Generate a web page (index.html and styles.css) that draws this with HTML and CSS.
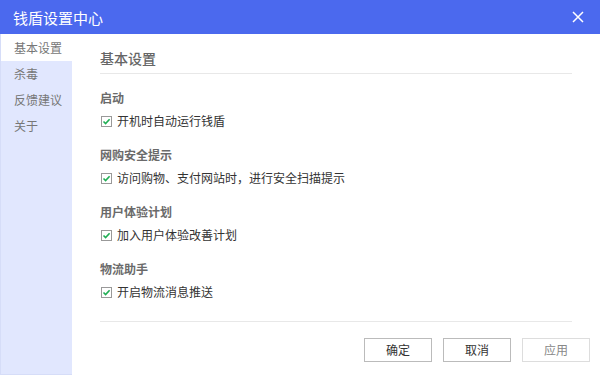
FILE: index.html
```html
<!DOCTYPE html>
<html>
<head>
<meta charset="utf-8">
<link rel="stylesheet" href="styles.css">
</head>
<body>
<div class="win">
  <div class="titlebar">
    <span class="title">钱盾设置中心</span>
    <svg class="close" width="12" height="12" viewBox="0 0 12 12"><path d="M1 1L11 11M11 1L1 11" stroke="#fff" stroke-width="1.5"/></svg>
  </div>
  <div class="body">
    <div class="side">
      <div class="item active">基本设置</div>
      <div class="item">杀毒</div>
      <div class="item">反馈建议</div>
      <div class="item">关于</div>
    </div>
    <div class="main">
      <div class="heading">基本设置</div>
      <div class="sections">
        <div class="sec">
          <div class="sec-title">启动</div>
          <label class="row"><span class="cb"><svg width="9" height="9" viewBox="0 0 9 9"><path d="M1.5 4.5L3.6 6.6L7.6 2.2" fill="none" stroke="#1fae54" stroke-width="1.6"/></svg></span>开机时自动运行钱盾</label>
        </div>
        <div class="sec">
          <div class="sec-title">网购安全提示</div>
          <label class="row"><span class="cb"><svg width="9" height="9" viewBox="0 0 9 9"><path d="M1.5 4.5L3.6 6.6L7.6 2.2" fill="none" stroke="#1fae54" stroke-width="1.6"/></svg></span>访问购物、支付网站时，进行安全扫描提示</label>
        </div>
        <div class="sec">
          <div class="sec-title">用户体验计划</div>
          <label class="row"><span class="cb"><svg width="9" height="9" viewBox="0 0 9 9"><path d="M1.5 4.5L3.6 6.6L7.6 2.2" fill="none" stroke="#1fae54" stroke-width="1.6"/></svg></span>加入用户体验改善计划</label>
        </div>
        <div class="sec">
          <div class="sec-title">物流助手</div>
          <label class="row"><span class="cb"><svg width="9" height="9" viewBox="0 0 9 9"><path d="M1.5 4.5L3.6 6.6L7.6 2.2" fill="none" stroke="#1fae54" stroke-width="1.6"/></svg></span>开启物流消息推送</label>
        </div>
      </div>
      <div class="footer">
        <button class="btn">确定</button>
        <button class="btn">取消</button>
        <button class="btn disabled">应用</button>
      </div>
    </div>
  </div>
</div>
</body>
</html>
```

FILE: styles.css
```css
* { box-sizing: border-box; }
html, body { margin: 0; padding: 0; }
body {
  width: 600px; height: 375px; overflow: hidden;
  font-family: "Noto Sans CJK SC", "Noto Sans", sans-serif;
  background: #fff;
}
.win { width: 600px; height: 375px; display: flex; flex-direction: column; }
.titlebar {
  height: 34px; background: #4b69ee; color: #fff;
  display: flex; align-items: center; justify-content: space-between;
  padding: 0 16px 0 13px; flex: none;
}
.title { font-size: 15px; letter-spacing: 0; }
.close { display: block; }
.body { flex: 1; display: flex; min-height: 0; }
.side {
  width: 72px; background: #e1e7fe; flex: none;
  border-left: 1px solid #d6ddf8; border-bottom: 1px solid #d6ddf8;
}
.item {
  height: 26px; line-height: 26px; font-size: 12px; color: #777;
  padding-left: 13px;
}
.item.active { background: #fff; height: 27px; line-height: 27px; }
.main { flex: 1; padding: 0 28px 0 28px; display: flex; flex-direction: column; }
.heading {
  font-size: 14px; color: #666; font-weight: 500; height: 40px; padding-top: 13px; line-height: 22px;
  border-bottom: 1px solid #e8e8e8;
}
.sections { flex: 1; padding-top: 13px; border-bottom: 1px solid #e8e8e8; }
.sec { height: 57px; }
.sec-title { font-size: 12px; color: #6a6a6a; font-weight: bold; height: 22px; line-height: 22px; }
.row {
  display: flex; align-items: center; font-size: 12px; color: #333;
  height: 24px; line-height: 24px;
}
.cb {
  width: 11px; height: 11px; border: 1px solid #999; background: #fff;
  display: flex; align-items: center; justify-content: center; margin-right: 5px;
  margin-left: 1px;
}
.cb svg { display: block; }
.footer {
  height: 53px; display: flex; justify-content: flex-end; align-items: center;
  gap: 11px; padding-top: 2px; margin-right: -18px;
}
.btn {
  width: 68px; height: 24px; background: #fff; border: 1px solid #bbb;
  font-family: inherit; font-size: 12px; color: #333; padding: 0;
}
.btn.disabled { border-color: #ddd; color: #888; }
```
